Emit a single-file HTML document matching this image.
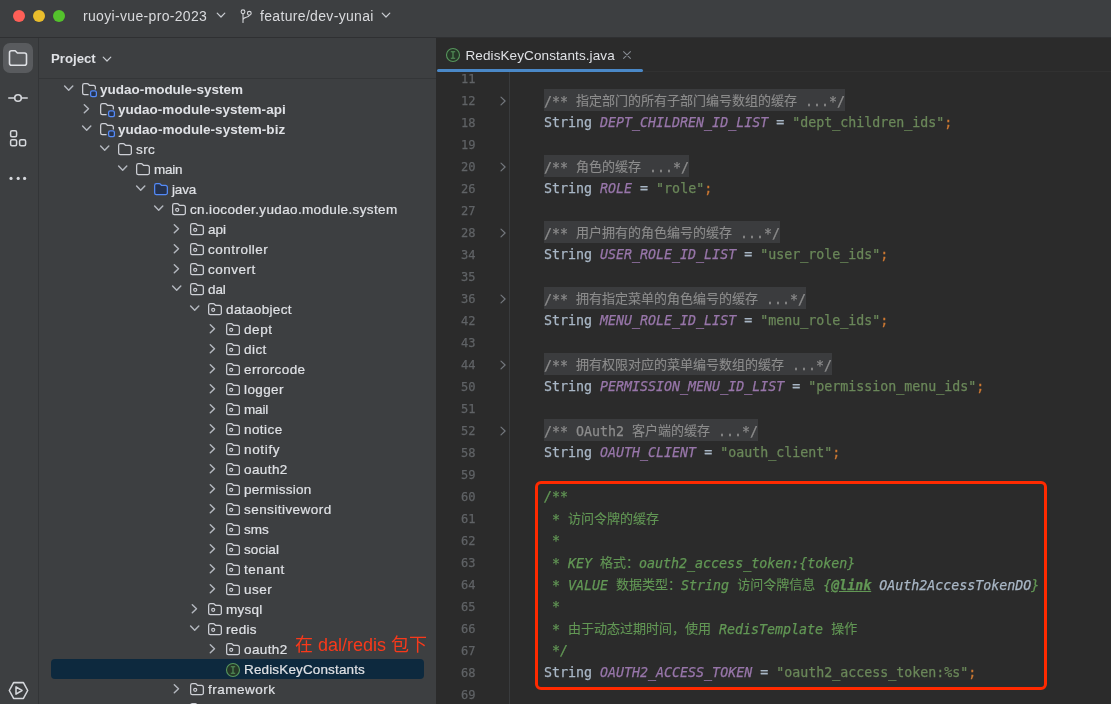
<!DOCTYPE html>
<html lang="zh">
<head>
<meta charset="utf-8">
<title>RedisKeyConstants.java</title>
<style>
*{box-sizing:border-box;margin:0;padding:0}
html,body{width:1111px;height:704px;overflow:hidden;background:#3d3f41}
body{position:relative;font-family:"Liberation Sans","Noto Sans CJK SC",sans-serif;font-size:13px;color:#dfe1e5;-webkit-font-smoothing:antialiased}
#title,#strip,#phead,#tree,#tab,#lines,#anno{will-change:transform}
#title{position:absolute;left:0;top:0;width:1111px;height:38px;background:#3d3f41;border-bottom:1px solid #2f3032}
.tl{position:absolute;top:10px;width:12px;height:12px;border-radius:50%}
#title .tx{position:absolute;top:7.500px;height:16px;line-height:16px;font-size:14px;letter-spacing:.33px;color:#d9dadd;white-space:nowrap}
.chv{position:absolute;width:16px;height:16px}
#strip{position:absolute;left:0;top:38px;width:39px;height:666px;background:#3d3f41;border-right:1px solid #333537}
#proj{position:absolute;left:39px;top:38px;width:397px;height:666px;background:#3d3f41;overflow:hidden}
#phead{position:absolute;left:0;top:0;width:397px;height:41px;border-bottom:1px solid #343638}
#phead .tx{position:absolute;left:12px;top:11px;height:20px;line-height:20px;font-weight:bold;font-size:13.200px;color:#dfe1e5}
#tree{position:absolute;left:-39px;top:-38px;width:475px;height:704px}
.row{position:absolute;left:0;width:475px;height:20px}
.row.sel:before{content:"";position:absolute;left:51px;top:-1.400px;width:373px;height:20.100px;background:#0d293e;border-radius:4px}
.row span{position:absolute;top:0;height:20px;line-height:20px;white-space:nowrap}
.row .a svg,.row .i svg{width:16px;height:16px;display:block;margin-top:2px}
.row .t{-webkit-text-stroke:.2px;font-size:13.500px;letter-spacing:.37px;color:#dfe1e5}
.row .t.b{font-weight:bold;letter-spacing:0;-webkit-text-stroke:0}
#editor{position:absolute;left:436px;top:38px;width:675px;height:666px;background:#2b2b2b;overflow:hidden}
#tab{position:absolute;left:0;top:0;width:675px;height:34px;border-bottom:1px solid #313131}
#tab .tx{position:absolute;left:29.500px;top:8px;height:20px;line-height:20px;font-size:13.500px;letter-spacing:.1px;color:#dfe1e5;white-space:nowrap}
#gut{position:absolute;left:73px;top:34px;width:1px;height:632px;background:#393b3d}
#lines{position:absolute;left:-436px;top:-38px;width:1111px;height:704px}
.ln{position:absolute;left:0;width:1111px;height:22px;line-height:22px;font-family:"DejaVu Sans Mono","Liberation Mono","Noto Sans CJK SC",monospace;font-size:13.300px;white-space:pre;color:#a9b7c6;-webkit-text-stroke:.25px}
.ln .no{position:absolute;left:436px;width:39.500px;text-align:right;color:#606366;font-size:12.800px;transform:scaleX(.94);transform-origin:100% 50%}
.ln .fa{position:absolute;left:494.500px;top:2.500px;width:16px;height:16px}
.ln .cd{position:absolute;left:544px;top:0}
.cj{font-family:"Noto Sans CJK SC",sans-serif;font-size:13px;font-style:normal;-webkit-text-stroke:.12px;position:relative;top:-1px}
.fd{color:#8c8c8c}
.ln .fb{position:absolute;left:544px;top:-1px;height:22.200px;background:#3b3c3e}
.c{color:#9876aa;font-style:italic}
.s{color:#6a8759}
.k{color:#cc7832}
.d{color:#629755;font-style:italic}
.lk{color:#629755;font-weight:bold;text-decoration:underline}
.lc{color:#a9b7c6}
#redbox{position:absolute;left:535px;top:481px;width:512px;height:209px;border:3px solid #ff2a00;border-radius:6px}
#anno{position:absolute;left:295px;top:629.500px;font-size:18px;color:#f8391b;white-space:nowrap;font-family:"Liberation Sans","Noto Sans CJK SC",sans-serif}
</style>
</head>
<body>
<div id="title">
<span class="tl" style="left:13px;background:#fe5f57"></span>
<span class="tl" style="left:33px;background:#e9bd2c"></span>
<span class="tl" style="left:53px;background:#54c22c"></span>
<span class="tx" style="left:83px">ruoyi-vue-pro-2023</span>
<svg class="chv" style="left:213px;top:7.300px" viewBox="0 0 16 16"><path d="M4.200 6.200L8 10l3.800-3.800" fill="none" stroke="#c9ccd1" stroke-width="1.200" stroke-linecap="round" stroke-linejoin="round"/></svg>
<svg style="position:absolute;left:238px;top:7.500px;width:16px;height:16px" viewBox="0 0 16 16"><g fill="none" stroke="#d5d7db" stroke-width="1.100"><circle cx="5" cy="3.800" r="1.900"/><circle cx="11.300" cy="5.300" r="1.900"/><path d="M5 5.700V14.500M11.300 7.200c0 2.600-6.300 1.600-6.300 4.600" stroke-linecap="round"/></g></svg>
<span class="tx" style="left:260px">feature/dev-yunai</span>
<svg class="chv" style="left:378px;top:7.300px" viewBox="0 0 16 16"><path d="M4.200 6.200L8 10l3.800-3.800" fill="none" stroke="#c9ccd1" stroke-width="1.200" stroke-linecap="round" stroke-linejoin="round"/></svg>
</div>
<div id="strip">
<div style="position:absolute;left:3px;top:5px;width:30px;height:30px;border-radius:7px;background:#595b5e"></div>
<svg style="position:absolute;left:8px;top:11px;width:20px;height:18px" viewBox="0 0 20 18"><path d="M1.500 3.700c0-1.100.9-2 2-2h3.700l2.200 2.300h7.100c1.100 0 2 .9 2 2v8.300c0 1.100-.9 2-2 2H3.500c-1.100 0-2-.9-2-2z" fill="none" stroke="#dfe1e5" stroke-width="1.600" stroke-linejoin="round"/></svg>
<svg style="position:absolute;left:7px;top:50px;width:22px;height:20px" viewBox="0 0 22 20"><g fill="none" stroke="#d5d7db" stroke-width="1.600" stroke-linecap="round"><path d="M1.800 10H7.500M14.500 10H20.200"/><circle cx="11" cy="10" r="3.300"/></g></svg>
<svg style="position:absolute;left:8px;top:91px;width:20px;height:20px" viewBox="0 0 20 20"><g fill="none" stroke="#d5d7db" stroke-width="1.500"><rect x="2.600" y="1.800" width="6" height="6" rx="1.500"/><rect x="2.600" y="10.800" width="6" height="6" rx="1.500"/><rect x="11.600" y="10.800" width="6" height="6" rx="1.500"/></g></svg>
<svg style="position:absolute;left:8px;top:135px;width:20px;height:10px" viewBox="0 0 20 10"><g fill="#d5d7db"><circle cx="3" cy="5.400" r="1.600"/><circle cx="10.200" cy="5.400" r="1.600"/><circle cx="16.600" cy="5.400" r="1.600"/></g></svg>
<svg style="position:absolute;left:7px;top:642px;width:23px;height:20px" viewBox="0 0 23 20"><g fill="none" stroke="#d5d7db" stroke-width="1.550" stroke-linejoin="round"><path d="M2.300 10.500L6.600 2.600h9.800l4.300 7.900-4.300 7.900H6.600z"/><path d="M9 6.800v7.400l6-3.700z"/></g></svg>
</div>
<div id="proj">
<div id="phead"><span class="tx">Project</span><svg class="chv" style="left:60px;top:13px" viewBox="0 0 16 16"><path d="M4.200 6.200L8 10l3.800-3.800" fill="none" stroke="#c9ccd1" stroke-width="1.200" stroke-linecap="round" stroke-linejoin="round"/></svg></div>
<div id="tree">
<div class="row" style="top:80px">
<span class="a" style="left:61px"><svg class="ar" viewBox="0 0 16 16"><path d="M3.600 3.900l4.100 4.300l4.100-4.300" fill="none" stroke="#b4b8bf" stroke-width="1.450" stroke-linecap="round" stroke-linejoin="round"/></svg></span>
<span class="i" style="left:81px"><svg class="ic" viewBox="0 0 16 16"><path d="M7.600 12.650H3.400a1.750 1.750 0 0 1-1.750-1.750V3.400a1.750 1.750 0 0 1 1.750-1.750h2.900c.5 0 .9.200 1.200.600l1 1.200h4.100a1.750 1.750 0 0 1 1.750 1.750v2.300" fill="none" stroke="#ced0d6" stroke-width="1.250"/><rect x="9.600" y="8.900" width="5.800" height="5.800" rx="1.700" fill="#25324d" stroke="#548af7" stroke-width="1.300"/></svg></span>
<span class="t b" style="left:100px;letter-spacing:-0.015px">yudao-module-system</span>
</div>
<div class="row" style="top:100px">
<span class="a" style="left:79px"><svg class="ar" viewBox="0 0 16 16"><path d="M5.300 2.700l4.200 4l-4.200 4" fill="none" stroke="#b4b8bf" stroke-width="1.450" stroke-linecap="round" stroke-linejoin="round"/></svg></span>
<span class="i" style="left:99px"><svg class="ic" viewBox="0 0 16 16"><path d="M7.600 12.650H3.400a1.750 1.750 0 0 1-1.750-1.750V3.400a1.750 1.750 0 0 1 1.750-1.750h2.900c.5 0 .9.200 1.200.600l1 1.200h4.100a1.750 1.750 0 0 1 1.750 1.750v2.300" fill="none" stroke="#ced0d6" stroke-width="1.250"/><rect x="9.600" y="8.900" width="5.800" height="5.800" rx="1.700" fill="#25324d" stroke="#548af7" stroke-width="1.300"/></svg></span>
<span class="t b" style="left:118px;letter-spacing:0.018px">yudao-module-system-api</span>
</div>
<div class="row" style="top:120px">
<span class="a" style="left:79px"><svg class="ar" viewBox="0 0 16 16"><path d="M3.600 3.900l4.100 4.300l4.100-4.300" fill="none" stroke="#b4b8bf" stroke-width="1.450" stroke-linecap="round" stroke-linejoin="round"/></svg></span>
<span class="i" style="left:99px"><svg class="ic" viewBox="0 0 16 16"><path d="M7.600 12.650H3.400a1.750 1.750 0 0 1-1.750-1.750V3.400a1.750 1.750 0 0 1 1.750-1.750h2.900c.5 0 .9.200 1.200.600l1 1.200h4.100a1.750 1.750 0 0 1 1.750 1.750v2.300" fill="none" stroke="#ced0d6" stroke-width="1.250"/><rect x="9.600" y="8.900" width="5.800" height="5.800" rx="1.700" fill="#25324d" stroke="#548af7" stroke-width="1.300"/></svg></span>
<span class="t b" style="left:118px;letter-spacing:0.029px">yudao-module-system-biz</span>
</div>
<div class="row" style="top:140px">
<span class="a" style="left:97px"><svg class="ar" viewBox="0 0 16 16"><path d="M3.600 3.900l4.100 4.300l4.100-4.300" fill="none" stroke="#b4b8bf" stroke-width="1.450" stroke-linecap="round" stroke-linejoin="round"/></svg></span>
<span class="i" style="left:117px"><svg class="ic" viewBox="0 0 16 16"><path d="M1.650 3.400a1.750 1.750 0 0 1 1.750-1.750h2.900c.5 0 .9.200 1.200.600l1 1.200h4.100a1.750 1.750 0 0 1 1.750 1.750v5.700a1.750 1.750 0 0 1-1.750 1.750h-9.200a1.750 1.750 0 0 1-1.750-1.750z" fill="none" stroke="#ced0d6" stroke-width="1.250"/></svg></span>
<span class="t" style="left:136px;letter-spacing:0.433px">src</span>
</div>
<div class="row" style="top:160px">
<span class="a" style="left:115px"><svg class="ar" viewBox="0 0 16 16"><path d="M3.600 3.900l4.100 4.300l4.100-4.300" fill="none" stroke="#b4b8bf" stroke-width="1.450" stroke-linecap="round" stroke-linejoin="round"/></svg></span>
<span class="i" style="left:135px"><svg class="ic" viewBox="0 0 16 16"><path d="M1.650 3.400a1.750 1.750 0 0 1 1.750-1.750h2.900c.5 0 .9.200 1.200.600l1 1.200h4.100a1.750 1.750 0 0 1 1.750 1.750v5.700a1.750 1.750 0 0 1-1.750 1.750h-9.200a1.750 1.750 0 0 1-1.750-1.750z" fill="none" stroke="#ced0d6" stroke-width="1.250"/></svg></span>
<span class="t" style="left:154px;letter-spacing:-0.266px">main</span>
</div>
<div class="row" style="top:180px">
<span class="a" style="left:133px"><svg class="ar" viewBox="0 0 16 16"><path d="M3.600 3.900l4.100 4.300l4.100-4.300" fill="none" stroke="#b4b8bf" stroke-width="1.450" stroke-linecap="round" stroke-linejoin="round"/></svg></span>
<span class="i" style="left:153px"><svg class="ic" viewBox="0 0 16 16"><path d="M1.650 3.400a1.750 1.750 0 0 1 1.750-1.750h2.900c.5 0 .9.200 1.200.600l1 1.200h4.100a1.750 1.750 0 0 1 1.750 1.750v5.700a1.750 1.750 0 0 1-1.750 1.750h-9.200a1.750 1.750 0 0 1-1.750-1.750z" fill="#25324d" stroke="#548af7" stroke-width="1.250"/></svg></span>
<span class="t" style="left:172px;letter-spacing:-0.166px">java</span>
</div>
<div class="row" style="top:200px">
<span class="a" style="left:151px"><svg class="ar" viewBox="0 0 16 16"><path d="M3.600 3.900l4.100 4.300l4.100-4.300" fill="none" stroke="#b4b8bf" stroke-width="1.450" stroke-linecap="round" stroke-linejoin="round"/></svg></span>
<span class="i" style="left:171px"><svg class="ic" viewBox="0 0 16 16"><path d="M1.650 3.400a1.750 1.750 0 0 1 1.750-1.750h2.900c.5 0 .9.200 1.200.600l1 1.200h4.100a1.750 1.750 0 0 1 1.750 1.750v5.700a1.750 1.750 0 0 1-1.750 1.750h-9.200a1.750 1.750 0 0 1-1.750-1.750z" fill="none" stroke="#ced0d6" stroke-width="1.250"/><circle cx="6.200" cy="7.850" r="1.550" fill="none" stroke="#ced0d6" stroke-width="1.150"/></svg></span>
<span class="t" style="left:190px;letter-spacing:0.363px">cn.iocoder.yudao.module.system</span>
</div>
<div class="row" style="top:220px">
<span class="a" style="left:169px"><svg class="ar" viewBox="0 0 16 16"><path d="M5.300 2.700l4.200 4l-4.200 4" fill="none" stroke="#b4b8bf" stroke-width="1.450" stroke-linecap="round" stroke-linejoin="round"/></svg></span>
<span class="i" style="left:189px"><svg class="ic" viewBox="0 0 16 16"><path d="M1.650 3.400a1.750 1.750 0 0 1 1.750-1.750h2.900c.5 0 .9.200 1.200.600l1 1.200h4.100a1.750 1.750 0 0 1 1.750 1.750v5.700a1.750 1.750 0 0 1-1.750 1.750h-9.200a1.750 1.750 0 0 1-1.750-1.750z" fill="none" stroke="#ced0d6" stroke-width="1.250"/><circle cx="6.200" cy="7.850" r="1.550" fill="none" stroke="#ced0d6" stroke-width="1.150"/></svg></span>
<span class="t" style="left:208px;letter-spacing:-0.039px">api</span>
</div>
<div class="row" style="top:240px">
<span class="a" style="left:169px"><svg class="ar" viewBox="0 0 16 16"><path d="M5.300 2.700l4.200 4l-4.200 4" fill="none" stroke="#b4b8bf" stroke-width="1.450" stroke-linecap="round" stroke-linejoin="round"/></svg></span>
<span class="i" style="left:189px"><svg class="ic" viewBox="0 0 16 16"><path d="M1.650 3.400a1.750 1.750 0 0 1 1.750-1.750h2.900c.5 0 .9.200 1.200.600l1 1.200h4.100a1.750 1.750 0 0 1 1.750 1.750v5.700a1.750 1.750 0 0 1-1.750 1.750h-9.200a1.750 1.750 0 0 1-1.750-1.750z" fill="none" stroke="#ced0d6" stroke-width="1.250"/><circle cx="6.200" cy="7.850" r="1.550" fill="none" stroke="#ced0d6" stroke-width="1.150"/></svg></span>
<span class="t" style="left:208px;letter-spacing:0.477px">controller</span>
</div>
<div class="row" style="top:260px">
<span class="a" style="left:169px"><svg class="ar" viewBox="0 0 16 16"><path d="M5.300 2.700l4.200 4l-4.200 4" fill="none" stroke="#b4b8bf" stroke-width="1.450" stroke-linecap="round" stroke-linejoin="round"/></svg></span>
<span class="i" style="left:189px"><svg class="ic" viewBox="0 0 16 16"><path d="M1.650 3.400a1.750 1.750 0 0 1 1.750-1.750h2.900c.5 0 .9.200 1.200.600l1 1.200h4.100a1.750 1.750 0 0 1 1.750 1.750v5.700a1.750 1.750 0 0 1-1.750 1.750h-9.200a1.750 1.750 0 0 1-1.750-1.750z" fill="none" stroke="#ced0d6" stroke-width="1.250"/><circle cx="6.200" cy="7.850" r="1.550" fill="none" stroke="#ced0d6" stroke-width="1.150"/></svg></span>
<span class="t" style="left:208px;letter-spacing:0.488px">convert</span>
</div>
<div class="row" style="top:280px">
<span class="a" style="left:169px"><svg class="ar" viewBox="0 0 16 16"><path d="M3.600 3.900l4.100 4.300l4.100-4.300" fill="none" stroke="#b4b8bf" stroke-width="1.450" stroke-linecap="round" stroke-linejoin="round"/></svg></span>
<span class="i" style="left:189px"><svg class="ic" viewBox="0 0 16 16"><path d="M1.650 3.400a1.750 1.750 0 0 1 1.750-1.750h2.900c.5 0 .9.200 1.200.600l1 1.200h4.100a1.750 1.750 0 0 1 1.750 1.750v5.700a1.750 1.750 0 0 1-1.750 1.750h-9.200a1.750 1.750 0 0 1-1.750-1.750z" fill="none" stroke="#ced0d6" stroke-width="1.250"/><circle cx="6.200" cy="7.850" r="1.550" fill="none" stroke="#ced0d6" stroke-width="1.150"/></svg></span>
<span class="t" style="left:208px;letter-spacing:-0.072px">dal</span>
</div>
<div class="row" style="top:300px">
<span class="a" style="left:187px"><svg class="ar" viewBox="0 0 16 16"><path d="M3.600 3.900l4.100 4.300l4.100-4.300" fill="none" stroke="#b4b8bf" stroke-width="1.450" stroke-linecap="round" stroke-linejoin="round"/></svg></span>
<span class="i" style="left:207px"><svg class="ic" viewBox="0 0 16 16"><path d="M1.650 3.400a1.750 1.750 0 0 1 1.750-1.750h2.900c.5 0 .9.200 1.200.600l1 1.200h4.100a1.750 1.750 0 0 1 1.750 1.750v5.700a1.750 1.750 0 0 1-1.750 1.750h-9.200a1.750 1.750 0 0 1-1.750-1.750z" fill="none" stroke="#ced0d6" stroke-width="1.250"/><circle cx="6.200" cy="7.850" r="1.550" fill="none" stroke="#ced0d6" stroke-width="1.150"/></svg></span>
<span class="t" style="left:226px;letter-spacing:0.369px">dataobject</span>
</div>
<div class="row" style="top:320px">
<span class="a" style="left:205px"><svg class="ar" viewBox="0 0 16 16"><path d="M5.300 2.700l4.200 4l-4.200 4" fill="none" stroke="#b4b8bf" stroke-width="1.450" stroke-linecap="round" stroke-linejoin="round"/></svg></span>
<span class="i" style="left:225px"><svg class="ic" viewBox="0 0 16 16"><path d="M1.650 3.400a1.750 1.750 0 0 1 1.750-1.750h2.900c.5 0 .9.200 1.200.600l1 1.200h4.100a1.750 1.750 0 0 1 1.750 1.750v5.700a1.750 1.750 0 0 1-1.750 1.750h-9.200a1.750 1.750 0 0 1-1.750-1.750z" fill="none" stroke="#ced0d6" stroke-width="1.250"/><circle cx="6.200" cy="7.850" r="1.550" fill="none" stroke="#ced0d6" stroke-width="1.150"/></svg></span>
<span class="t" style="left:244px;letter-spacing:0.605px">dept</span>
</div>
<div class="row" style="top:340px">
<span class="a" style="left:205px"><svg class="ar" viewBox="0 0 16 16"><path d="M5.300 2.700l4.200 4l-4.200 4" fill="none" stroke="#b4b8bf" stroke-width="1.450" stroke-linecap="round" stroke-linejoin="round"/></svg></span>
<span class="i" style="left:225px"><svg class="ic" viewBox="0 0 16 16"><path d="M1.650 3.400a1.750 1.750 0 0 1 1.750-1.750h2.900c.5 0 .9.200 1.200.600l1 1.200h4.100a1.750 1.750 0 0 1 1.750 1.750v5.700a1.750 1.750 0 0 1-1.750 1.750h-9.200a1.750 1.750 0 0 1-1.750-1.750z" fill="none" stroke="#ced0d6" stroke-width="1.250"/><circle cx="6.200" cy="7.850" r="1.550" fill="none" stroke="#ced0d6" stroke-width="1.150"/></svg></span>
<span class="t" style="left:244px;letter-spacing:0.446px">dict</span>
</div>
<div class="row" style="top:360px">
<span class="a" style="left:205px"><svg class="ar" viewBox="0 0 16 16"><path d="M5.300 2.700l4.200 4l-4.200 4" fill="none" stroke="#b4b8bf" stroke-width="1.450" stroke-linecap="round" stroke-linejoin="round"/></svg></span>
<span class="i" style="left:225px"><svg class="ic" viewBox="0 0 16 16"><path d="M1.650 3.400a1.750 1.750 0 0 1 1.750-1.750h2.900c.5 0 .9.200 1.200.600l1 1.200h4.100a1.750 1.750 0 0 1 1.750 1.750v5.700a1.750 1.750 0 0 1-1.750 1.750h-9.200a1.750 1.750 0 0 1-1.750-1.750z" fill="none" stroke="#ced0d6" stroke-width="1.250"/><circle cx="6.200" cy="7.850" r="1.550" fill="none" stroke="#ced0d6" stroke-width="1.150"/></svg></span>
<span class="t" style="left:244px;letter-spacing:0.413px">errorcode</span>
</div>
<div class="row" style="top:380px">
<span class="a" style="left:205px"><svg class="ar" viewBox="0 0 16 16"><path d="M5.300 2.700l4.200 4l-4.200 4" fill="none" stroke="#b4b8bf" stroke-width="1.450" stroke-linecap="round" stroke-linejoin="round"/></svg></span>
<span class="i" style="left:225px"><svg class="ic" viewBox="0 0 16 16"><path d="M1.650 3.400a1.750 1.750 0 0 1 1.750-1.750h2.900c.5 0 .9.200 1.200.600l1 1.200h4.100a1.750 1.750 0 0 1 1.750 1.750v5.700a1.750 1.750 0 0 1-1.750 1.750h-9.200a1.750 1.750 0 0 1-1.750-1.750z" fill="none" stroke="#ced0d6" stroke-width="1.250"/><circle cx="6.200" cy="7.850" r="1.550" fill="none" stroke="#ced0d6" stroke-width="1.150"/></svg></span>
<span class="t" style="left:244px;letter-spacing:0.395px">logger</span>
</div>
<div class="row" style="top:400px">
<span class="a" style="left:205px"><svg class="ar" viewBox="0 0 16 16"><path d="M5.300 2.700l4.200 4l-4.200 4" fill="none" stroke="#b4b8bf" stroke-width="1.450" stroke-linecap="round" stroke-linejoin="round"/></svg></span>
<span class="i" style="left:225px"><svg class="ic" viewBox="0 0 16 16"><path d="M1.650 3.400a1.750 1.750 0 0 1 1.750-1.750h2.900c.5 0 .9.200 1.200.600l1 1.200h4.100a1.750 1.750 0 0 1 1.750 1.750v5.700a1.750 1.750 0 0 1-1.750 1.750h-9.200a1.750 1.750 0 0 1-1.750-1.750z" fill="none" stroke="#ced0d6" stroke-width="1.250"/><circle cx="6.200" cy="7.850" r="1.550" fill="none" stroke="#ced0d6" stroke-width="1.150"/></svg></span>
<span class="t" style="left:244px;letter-spacing:-0.141px">mail</span>
</div>
<div class="row" style="top:420px">
<span class="a" style="left:205px"><svg class="ar" viewBox="0 0 16 16"><path d="M5.300 2.700l4.200 4l-4.200 4" fill="none" stroke="#b4b8bf" stroke-width="1.450" stroke-linecap="round" stroke-linejoin="round"/></svg></span>
<span class="i" style="left:225px"><svg class="ic" viewBox="0 0 16 16"><path d="M1.650 3.400a1.750 1.750 0 0 1 1.750-1.750h2.900c.5 0 .9.200 1.200.600l1 1.200h4.100a1.750 1.750 0 0 1 1.750 1.750v5.700a1.750 1.750 0 0 1-1.750 1.750h-9.200a1.750 1.750 0 0 1-1.750-1.750z" fill="none" stroke="#ced0d6" stroke-width="1.250"/><circle cx="6.200" cy="7.850" r="1.550" fill="none" stroke="#ced0d6" stroke-width="1.150"/></svg></span>
<span class="t" style="left:244px;letter-spacing:0.428px">notice</span>
</div>
<div class="row" style="top:440px">
<span class="a" style="left:205px"><svg class="ar" viewBox="0 0 16 16"><path d="M5.300 2.700l4.200 4l-4.200 4" fill="none" stroke="#b4b8bf" stroke-width="1.450" stroke-linecap="round" stroke-linejoin="round"/></svg></span>
<span class="i" style="left:225px"><svg class="ic" viewBox="0 0 16 16"><path d="M1.650 3.400a1.750 1.750 0 0 1 1.750-1.750h2.900c.5 0 .9.200 1.200.600l1 1.200h4.100a1.750 1.750 0 0 1 1.750 1.750v5.700a1.750 1.750 0 0 1-1.750 1.750h-9.200a1.750 1.750 0 0 1-1.750-1.750z" fill="none" stroke="#ced0d6" stroke-width="1.250"/><circle cx="6.200" cy="7.850" r="1.550" fill="none" stroke="#ced0d6" stroke-width="1.150"/></svg></span>
<span class="t" style="left:244px;letter-spacing:0.670px">notify</span>
</div>
<div class="row" style="top:460px">
<span class="a" style="left:205px"><svg class="ar" viewBox="0 0 16 16"><path d="M5.300 2.700l4.200 4l-4.200 4" fill="none" stroke="#b4b8bf" stroke-width="1.450" stroke-linecap="round" stroke-linejoin="round"/></svg></span>
<span class="i" style="left:225px"><svg class="ic" viewBox="0 0 16 16"><path d="M1.650 3.400a1.750 1.750 0 0 1 1.750-1.750h2.900c.5 0 .9.200 1.200.600l1 1.200h4.100a1.750 1.750 0 0 1 1.750 1.750v5.700a1.750 1.750 0 0 1-1.750 1.750h-9.200a1.750 1.750 0 0 1-1.750-1.750z" fill="none" stroke="#ced0d6" stroke-width="1.250"/><circle cx="6.200" cy="7.850" r="1.550" fill="none" stroke="#ced0d6" stroke-width="1.150"/></svg></span>
<span class="t" style="left:244px;letter-spacing:0.417px">oauth2</span>
</div>
<div class="row" style="top:480px">
<span class="a" style="left:205px"><svg class="ar" viewBox="0 0 16 16"><path d="M5.300 2.700l4.200 4l-4.200 4" fill="none" stroke="#b4b8bf" stroke-width="1.450" stroke-linecap="round" stroke-linejoin="round"/></svg></span>
<span class="i" style="left:225px"><svg class="ic" viewBox="0 0 16 16"><path d="M1.650 3.400a1.750 1.750 0 0 1 1.750-1.750h2.900c.5 0 .9.200 1.200.600l1 1.200h4.100a1.750 1.750 0 0 1 1.750 1.750v5.700a1.750 1.750 0 0 1-1.750 1.750h-9.200a1.750 1.750 0 0 1-1.750-1.750z" fill="none" stroke="#ced0d6" stroke-width="1.250"/><circle cx="6.200" cy="7.850" r="1.550" fill="none" stroke="#ced0d6" stroke-width="1.150"/></svg></span>
<span class="t" style="left:244px;letter-spacing:0.212px">permission</span>
</div>
<div class="row" style="top:500px">
<span class="a" style="left:205px"><svg class="ar" viewBox="0 0 16 16"><path d="M5.300 2.700l4.200 4l-4.200 4" fill="none" stroke="#b4b8bf" stroke-width="1.450" stroke-linecap="round" stroke-linejoin="round"/></svg></span>
<span class="i" style="left:225px"><svg class="ic" viewBox="0 0 16 16"><path d="M1.650 3.400a1.750 1.750 0 0 1 1.750-1.750h2.900c.5 0 .9.200 1.200.600l1 1.200h4.100a1.750 1.750 0 0 1 1.750 1.750v5.700a1.750 1.750 0 0 1-1.750 1.750h-9.200a1.750 1.750 0 0 1-1.750-1.750z" fill="none" stroke="#ced0d6" stroke-width="1.250"/><circle cx="6.200" cy="7.850" r="1.550" fill="none" stroke="#ced0d6" stroke-width="1.150"/></svg></span>
<span class="t" style="left:244px;letter-spacing:0.446px">sensitiveword</span>
</div>
<div class="row" style="top:520px">
<span class="a" style="left:205px"><svg class="ar" viewBox="0 0 16 16"><path d="M5.300 2.700l4.200 4l-4.200 4" fill="none" stroke="#b4b8bf" stroke-width="1.450" stroke-linecap="round" stroke-linejoin="round"/></svg></span>
<span class="i" style="left:225px"><svg class="ic" viewBox="0 0 16 16"><path d="M1.650 3.400a1.750 1.750 0 0 1 1.750-1.750h2.900c.5 0 .9.200 1.200.600l1 1.200h4.100a1.750 1.750 0 0 1 1.750 1.750v5.700a1.750 1.750 0 0 1-1.750 1.750h-9.200a1.750 1.750 0 0 1-1.750-1.750z" fill="none" stroke="#ced0d6" stroke-width="1.250"/><circle cx="6.200" cy="7.850" r="1.550" fill="none" stroke="#ced0d6" stroke-width="1.150"/></svg></span>
<span class="t" style="left:244px;letter-spacing:-0.017px">sms</span>
</div>
<div class="row" style="top:540px">
<span class="a" style="left:205px"><svg class="ar" viewBox="0 0 16 16"><path d="M5.300 2.700l4.200 4l-4.200 4" fill="none" stroke="#b4b8bf" stroke-width="1.450" stroke-linecap="round" stroke-linejoin="round"/></svg></span>
<span class="i" style="left:225px"><svg class="ic" viewBox="0 0 16 16"><path d="M1.650 3.400a1.750 1.750 0 0 1 1.750-1.750h2.900c.5 0 .9.200 1.200.600l1 1.200h4.100a1.750 1.750 0 0 1 1.750 1.750v5.700a1.750 1.750 0 0 1-1.750 1.750h-9.200a1.750 1.750 0 0 1-1.750-1.750z" fill="none" stroke="#ced0d6" stroke-width="1.250"/><circle cx="6.200" cy="7.850" r="1.550" fill="none" stroke="#ced0d6" stroke-width="1.150"/></svg></span>
<span class="t" style="left:244px;letter-spacing:0.081px">social</span>
</div>
<div class="row" style="top:560px">
<span class="a" style="left:205px"><svg class="ar" viewBox="0 0 16 16"><path d="M5.300 2.700l4.200 4l-4.200 4" fill="none" stroke="#b4b8bf" stroke-width="1.450" stroke-linecap="round" stroke-linejoin="round"/></svg></span>
<span class="i" style="left:225px"><svg class="ic" viewBox="0 0 16 16"><path d="M1.650 3.400a1.750 1.750 0 0 1 1.750-1.750h2.900c.5 0 .9.200 1.200.600l1 1.200h4.100a1.750 1.750 0 0 1 1.750 1.750v5.700a1.750 1.750 0 0 1-1.750 1.750h-9.200a1.750 1.750 0 0 1-1.750-1.750z" fill="none" stroke="#ced0d6" stroke-width="1.250"/><circle cx="6.200" cy="7.850" r="1.550" fill="none" stroke="#ced0d6" stroke-width="1.150"/></svg></span>
<span class="t" style="left:244px;letter-spacing:0.542px">tenant</span>
</div>
<div class="row" style="top:580px">
<span class="a" style="left:205px"><svg class="ar" viewBox="0 0 16 16"><path d="M5.300 2.700l4.200 4l-4.200 4" fill="none" stroke="#b4b8bf" stroke-width="1.450" stroke-linecap="round" stroke-linejoin="round"/></svg></span>
<span class="i" style="left:225px"><svg class="ic" viewBox="0 0 16 16"><path d="M1.650 3.400a1.750 1.750 0 0 1 1.750-1.750h2.900c.5 0 .9.200 1.200.600l1 1.200h4.100a1.750 1.750 0 0 1 1.750 1.750v5.700a1.750 1.750 0 0 1-1.750 1.750h-9.200a1.750 1.750 0 0 1-1.750-1.750z" fill="none" stroke="#ced0d6" stroke-width="1.250"/><circle cx="6.200" cy="7.850" r="1.550" fill="none" stroke="#ced0d6" stroke-width="1.150"/></svg></span>
<span class="t" style="left:244px;letter-spacing:0.484px">user</span>
</div>
<div class="row" style="top:600px">
<span class="a" style="left:187px"><svg class="ar" viewBox="0 0 16 16"><path d="M5.300 2.700l4.200 4l-4.200 4" fill="none" stroke="#b4b8bf" stroke-width="1.450" stroke-linecap="round" stroke-linejoin="round"/></svg></span>
<span class="i" style="left:207px"><svg class="ic" viewBox="0 0 16 16"><path d="M1.650 3.400a1.750 1.750 0 0 1 1.750-1.750h2.900c.5 0 .9.200 1.200.600l1 1.200h4.100a1.750 1.750 0 0 1 1.750 1.750v5.700a1.750 1.750 0 0 1-1.750 1.750h-9.200a1.750 1.750 0 0 1-1.750-1.750z" fill="none" stroke="#ced0d6" stroke-width="1.250"/><circle cx="6.200" cy="7.850" r="1.550" fill="none" stroke="#ced0d6" stroke-width="1.150"/></svg></span>
<span class="t" style="left:226px;letter-spacing:0.227px">mysql</span>
</div>
<div class="row" style="top:620px">
<span class="a" style="left:187px"><svg class="ar" viewBox="0 0 16 16"><path d="M3.600 3.900l4.100 4.300l4.100-4.300" fill="none" stroke="#b4b8bf" stroke-width="1.450" stroke-linecap="round" stroke-linejoin="round"/></svg></span>
<span class="i" style="left:207px"><svg class="ic" viewBox="0 0 16 16"><path d="M1.650 3.400a1.750 1.750 0 0 1 1.750-1.750h2.900c.5 0 .9.200 1.200.600l1 1.200h4.100a1.750 1.750 0 0 1 1.750 1.750v5.700a1.750 1.750 0 0 1-1.750 1.750h-9.200a1.750 1.750 0 0 1-1.750-1.750z" fill="none" stroke="#ced0d6" stroke-width="1.250"/><circle cx="6.200" cy="7.850" r="1.550" fill="none" stroke="#ced0d6" stroke-width="1.150"/></svg></span>
<span class="t" style="left:226px;letter-spacing:0.327px">redis</span>
</div>
<div class="row" style="top:640px">
<span class="a" style="left:205px"><svg class="ar" viewBox="0 0 16 16"><path d="M5.300 2.700l4.200 4l-4.200 4" fill="none" stroke="#b4b8bf" stroke-width="1.450" stroke-linecap="round" stroke-linejoin="round"/></svg></span>
<span class="i" style="left:225px"><svg class="ic" viewBox="0 0 16 16"><path d="M1.650 3.400a1.750 1.750 0 0 1 1.750-1.750h2.900c.5 0 .9.200 1.200.600l1 1.200h4.100a1.750 1.750 0 0 1 1.750 1.750v5.700a1.750 1.750 0 0 1-1.750 1.750h-9.200a1.750 1.750 0 0 1-1.750-1.750z" fill="none" stroke="#ced0d6" stroke-width="1.250"/><circle cx="6.200" cy="7.850" r="1.550" fill="none" stroke="#ced0d6" stroke-width="1.150"/></svg></span>
<span class="t" style="left:244px;letter-spacing:0.384px">oauth2</span>
</div>
<div class="row sel" style="top:660px">
<span class="i" style="left:225px"><svg class="ic" viewBox="0 0 16 16"><circle cx="8" cy="8" r="6.500" fill="#253627" stroke="#57965c" stroke-width="1.1"/><path d="M5.800 4.800h4.400M5.800 11.200h4.400M8 4.800v6.400" stroke="#57965c" stroke-width="1.100" fill="none"/></svg></span>
<span class="t" style="left:244px;letter-spacing:0.143px">RedisKeyConstants</span>
</div>
<div class="row" style="top:680px">
<span class="a" style="left:169px"><svg class="ar" viewBox="0 0 16 16"><path d="M5.300 2.700l4.200 4l-4.200 4" fill="none" stroke="#b4b8bf" stroke-width="1.450" stroke-linecap="round" stroke-linejoin="round"/></svg></span>
<span class="i" style="left:189px"><svg class="ic" viewBox="0 0 16 16"><path d="M1.650 3.400a1.750 1.750 0 0 1 1.750-1.750h2.900c.5 0 .9.200 1.200.600l1 1.200h4.100a1.750 1.750 0 0 1 1.750 1.750v5.700a1.750 1.750 0 0 1-1.750 1.750h-9.200a1.750 1.750 0 0 1-1.750-1.750z" fill="none" stroke="#ced0d6" stroke-width="1.250"/><circle cx="6.200" cy="7.850" r="1.550" fill="none" stroke="#ced0d6" stroke-width="1.150"/></svg></span>
<span class="t" style="left:208px;letter-spacing:0.509px">framework</span>
</div>
<div class="row" style="top:700px">
<span class="i" style="left:189px"><svg class="ic" viewBox="0 0 16 16"><path d="M1.650 3.400a1.750 1.750 0 0 1 1.750-1.750h2.900c.5 0 .9.200 1.200.600l1 1.200h4.100a1.750 1.750 0 0 1 1.750 1.750v5.700a1.750 1.750 0 0 1-1.750 1.750h-9.200a1.750 1.750 0 0 1-1.750-1.750z" fill="none" stroke="#ced0d6" stroke-width="1.250"/><circle cx="6.200" cy="7.850" r="1.550" fill="none" stroke="#ced0d6" stroke-width="1.150"/></svg></span>
<span class="t" style="left:208px"></span>
</div>
</div>
</div>
<div id="editor">
<div id="tab">
<svg style="position:absolute;left:9px;top:9px;width:16px;height:16px" viewBox="0 0 16 16"><circle cx="8" cy="8" r="6.500" fill="#253627" stroke="#57965c" stroke-width="1.100"/><path d="M5.800 4.800h4.400M5.800 11.200h4.400M8 4.800v6.400" stroke="#57965c" stroke-width="1.100" fill="none"/></svg>
<span class="tx">RedisKeyConstants.java</span>
<svg style="position:absolute;left:183px;top:9px;width:16px;height:16px" viewBox="0 0 16 16"><path d="M4.600 4.600l6.800 6.800M11.400 4.600l-6.800 6.800" stroke="#868a91" stroke-width="1.100" stroke-linecap="round"/></svg>
<div style="position:absolute;left:1px;top:31px;width:206px;height:3px;border-radius:2px;background:#4a88c7"></div>
</div>
<div id="gut"></div>
<div id="lines">
<div class="ln" style="top:68px"><span class="no">11</span><span class="cd"></span></div>
<div class="ln" style="top:90px"><span class="no">12</span><span class="fa"><svg viewBox="0 0 16 16" width="16" height="16"><path d="M6 4.100l4.100 3.900l-4.100 3.900" fill="none" stroke="#73777d" stroke-width="1.200" stroke-linecap="round" stroke-linejoin="round"/></svg></span><span class="fb" style="width:301px"></span><span class="cd"><span class="fd">/** <span class="cj">指定部门的所有子部门编号数组的缓存</span> ...*/</span></span></div>
<div class="ln" style="top:112px"><span class="no">18</span><span class="cd">String <span class="c">DEPT_CHILDREN_ID_LIST</span> = <span class="s">"dept_children_ids"</span><span class="k">;</span></span></div>
<div class="ln" style="top:134px"><span class="no">19</span><span class="cd"></span></div>
<div class="ln" style="top:156px"><span class="no">20</span><span class="fa"><svg viewBox="0 0 16 16" width="16" height="16"><path d="M6 4.100l4.100 3.900l-4.100 3.900" fill="none" stroke="#73777d" stroke-width="1.200" stroke-linecap="round" stroke-linejoin="round"/></svg></span><span class="fb" style="width:145px"></span><span class="cd"><span class="fd">/** <span class="cj">角色的缓存</span> ...*/</span></span></div>
<div class="ln" style="top:178px"><span class="no">26</span><span class="cd">String <span class="c">ROLE</span> = <span class="s">"role"</span><span class="k">;</span></span></div>
<div class="ln" style="top:200px"><span class="no">27</span><span class="cd"></span></div>
<div class="ln" style="top:222px"><span class="no">28</span><span class="fa"><svg viewBox="0 0 16 16" width="16" height="16"><path d="M6 4.100l4.100 3.900l-4.100 3.900" fill="none" stroke="#73777d" stroke-width="1.200" stroke-linecap="round" stroke-linejoin="round"/></svg></span><span class="fb" style="width:236px"></span><span class="cd"><span class="fd">/** <span class="cj">用户拥有的角色编号的缓存</span> ...*/</span></span></div>
<div class="ln" style="top:244px"><span class="no">34</span><span class="cd">String <span class="c">USER_ROLE_ID_LIST</span> = <span class="s">"user_role_ids"</span><span class="k">;</span></span></div>
<div class="ln" style="top:266px"><span class="no">35</span><span class="cd"></span></div>
<div class="ln" style="top:288px"><span class="no">36</span><span class="fa"><svg viewBox="0 0 16 16" width="16" height="16"><path d="M6 4.100l4.100 3.900l-4.100 3.900" fill="none" stroke="#73777d" stroke-width="1.200" stroke-linecap="round" stroke-linejoin="round"/></svg></span><span class="fb" style="width:262px"></span><span class="cd"><span class="fd">/** <span class="cj">拥有指定菜单的角色编号的缓存</span> ...*/</span></span></div>
<div class="ln" style="top:310px"><span class="no">42</span><span class="cd">String <span class="c">MENU_ROLE_ID_LIST</span> = <span class="s">"menu_role_ids"</span><span class="k">;</span></span></div>
<div class="ln" style="top:332px"><span class="no">43</span><span class="cd"></span></div>
<div class="ln" style="top:354px"><span class="no">44</span><span class="fa"><svg viewBox="0 0 16 16" width="16" height="16"><path d="M6 4.100l4.100 3.900l-4.100 3.900" fill="none" stroke="#73777d" stroke-width="1.200" stroke-linecap="round" stroke-linejoin="round"/></svg></span><span class="fb" style="width:288px"></span><span class="cd"><span class="fd">/** <span class="cj">拥有权限对应的菜单编号数组的缓存</span> ...*/</span></span></div>
<div class="ln" style="top:376px"><span class="no">50</span><span class="cd">String <span class="c">PERMISSION_MENU_ID_LIST</span> = <span class="s">"permission_menu_ids"</span><span class="k">;</span></span></div>
<div class="ln" style="top:398px"><span class="no">51</span><span class="cd"></span></div>
<div class="ln" style="top:420px"><span class="no">52</span><span class="fa"><svg viewBox="0 0 16 16" width="16" height="16"><path d="M6 4.100l4.100 3.900l-4.100 3.900" fill="none" stroke="#73777d" stroke-width="1.200" stroke-linecap="round" stroke-linejoin="round"/></svg></span><span class="fb" style="width:214px"></span><span class="cd"><span class="fd">/** OAuth2 <span class="cj">客户端的缓存</span> ...*/</span></span></div>
<div class="ln" style="top:442px"><span class="no">58</span><span class="cd">String <span class="c">OAUTH_CLIENT</span> = <span class="s">"oauth_client"</span><span class="k">;</span></span></div>
<div class="ln" style="top:464px"><span class="no">59</span><span class="cd"></span></div>
<div class="ln" style="top:486px"><span class="no">60</span><span class="cd"><span class="d">/**</span></span></div>
<div class="ln" style="top:508px"><span class="no">61</span><span class="cd"><span class="d"> * <span class="cj">访问令牌的缓存</span></span></span></div>
<div class="ln" style="top:530px"><span class="no">62</span><span class="cd"><span class="d"> *</span></span></div>
<div class="ln" style="top:552px"><span class="no">63</span><span class="cd"><span class="d"> * KEY <span class="cj">格式：</span>oauth2_access_token:{token}</span></span></div>
<div class="ln" style="top:574px"><span class="no">64</span><span class="cd"><span class="d"> * VALUE <span class="cj">数据类型：</span>String <span class="cj">访问令牌信息</span> {<span class="lk">@link</span> <span class="lc">OAuth2AccessTokenDO</span>}</span></span></div>
<div class="ln" style="top:596px"><span class="no">65</span><span class="cd"><span class="d"> *</span></span></div>
<div class="ln" style="top:618px"><span class="no">66</span><span class="cd"><span class="d"> * <span class="cj">由于动态过期时间，使用</span> RedisTemplate <span class="cj">操作</span></span></span></div>
<div class="ln" style="top:640px"><span class="no">67</span><span class="cd"><span class="d"> */</span></span></div>
<div class="ln" style="top:662px"><span class="no">68</span><span class="cd">String <span class="c">OAUTH2_ACCESS_TOKEN</span> = <span class="s">"oauth2_access_token:%s"</span><span class="k">;</span></span></div>
<div class="ln" style="top:684px"><span class="no">69</span><span class="cd"></span></div>
</div>
</div>
<div id="redbox"></div>
<div id="anno">在 dal/redis 包下</div>
</body>
</html>
